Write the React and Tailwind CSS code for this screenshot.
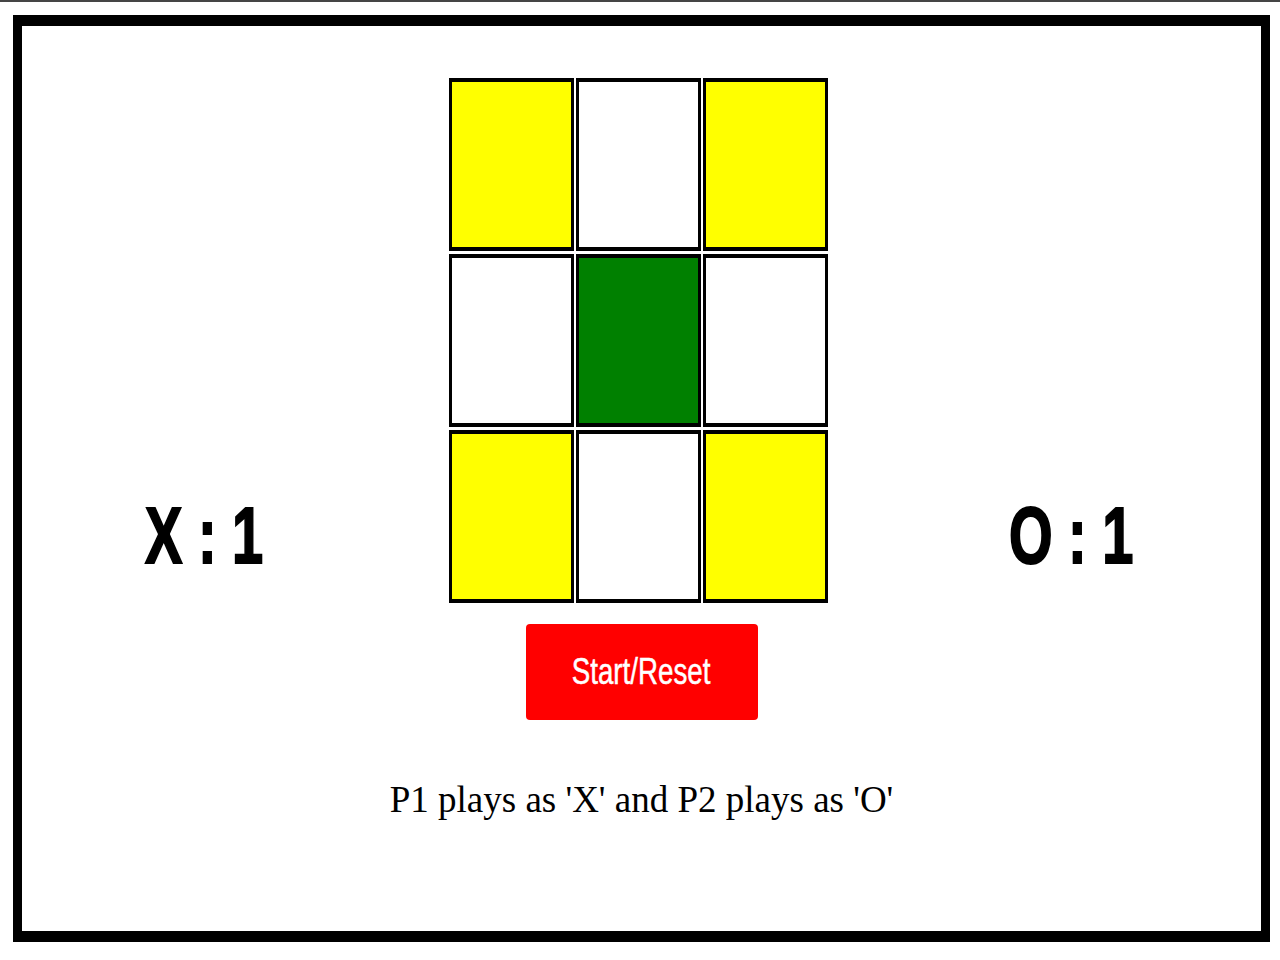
import React from 'react';

const cells = ['yellow', 'white', 'yellow', 'white', 'green', 'white', 'yellow', 'white', 'yellow'];

const cellColor = {
  yellow: 'bg-[#ffff00]',
  white: 'bg-white',
  green: 'bg-[#008000]',
};

function Score({ label, value }) {
  return (
    <span className="inline-block origin-left scale-x-[0.7] whitespace-pre text-[80px] font-bold leading-none text-black [font-family:'Liberation_Sans',Arial,sans-serif] [-webkit-text-stroke:2px_black]">
      {label} : {value}
    </span>
  );
}

export default function App() {
  return (
    <div className="min-h-screen bg-white">
      {/* top strip */}
      <div className="h-[2px] bg-[#454545]" />

      {/* board frame */}
      <div className="ml-[13px] mt-[13px] h-[927px] w-[1257px] border-x-[9px] border-y-[11px] border-black bg-white">
        <div className="flex items-end pt-[52px]">
          <div className="w-[427px] pb-[27px] pl-[123px]">
            <Score label="X" value="1" />
          </div>

          <div className="grid w-[379px] grid-cols-[125px_125px_125px] gap-x-[2px] gap-y-[3px]">
            {cells.map((c, i) => (
              <div
                key={i}
                className={`h-[173px] border-x-[3px] border-y-4 border-black ${cellColor[c]}`}
              />
            ))}
          </div>

          <div className="flex-1 pb-[27px] pl-[181px]">
            <Score label="O" value="1" />
          </div>
        </div>

        <button className="mx-auto mt-[21px] flex h-[96px] w-[232px] items-center justify-center rounded-[4px] bg-[#ff0000]">
          <span className="inline-block scale-x-[0.77] text-[36px] leading-none text-white [font-family:'Liberation_Sans',Arial,sans-serif] [-webkit-text-stroke:0.5px_white]">
            Start/Reset
          </span>
        </button>

        <p className="mt-[61px] text-center text-[37px] leading-none text-black [font-family:'Liberation_Serif','Times_New_Roman',serif]">
          P1 plays as 'X' and P2 plays as 'O'
        </p>
      </div>
    </div>
  );
}
